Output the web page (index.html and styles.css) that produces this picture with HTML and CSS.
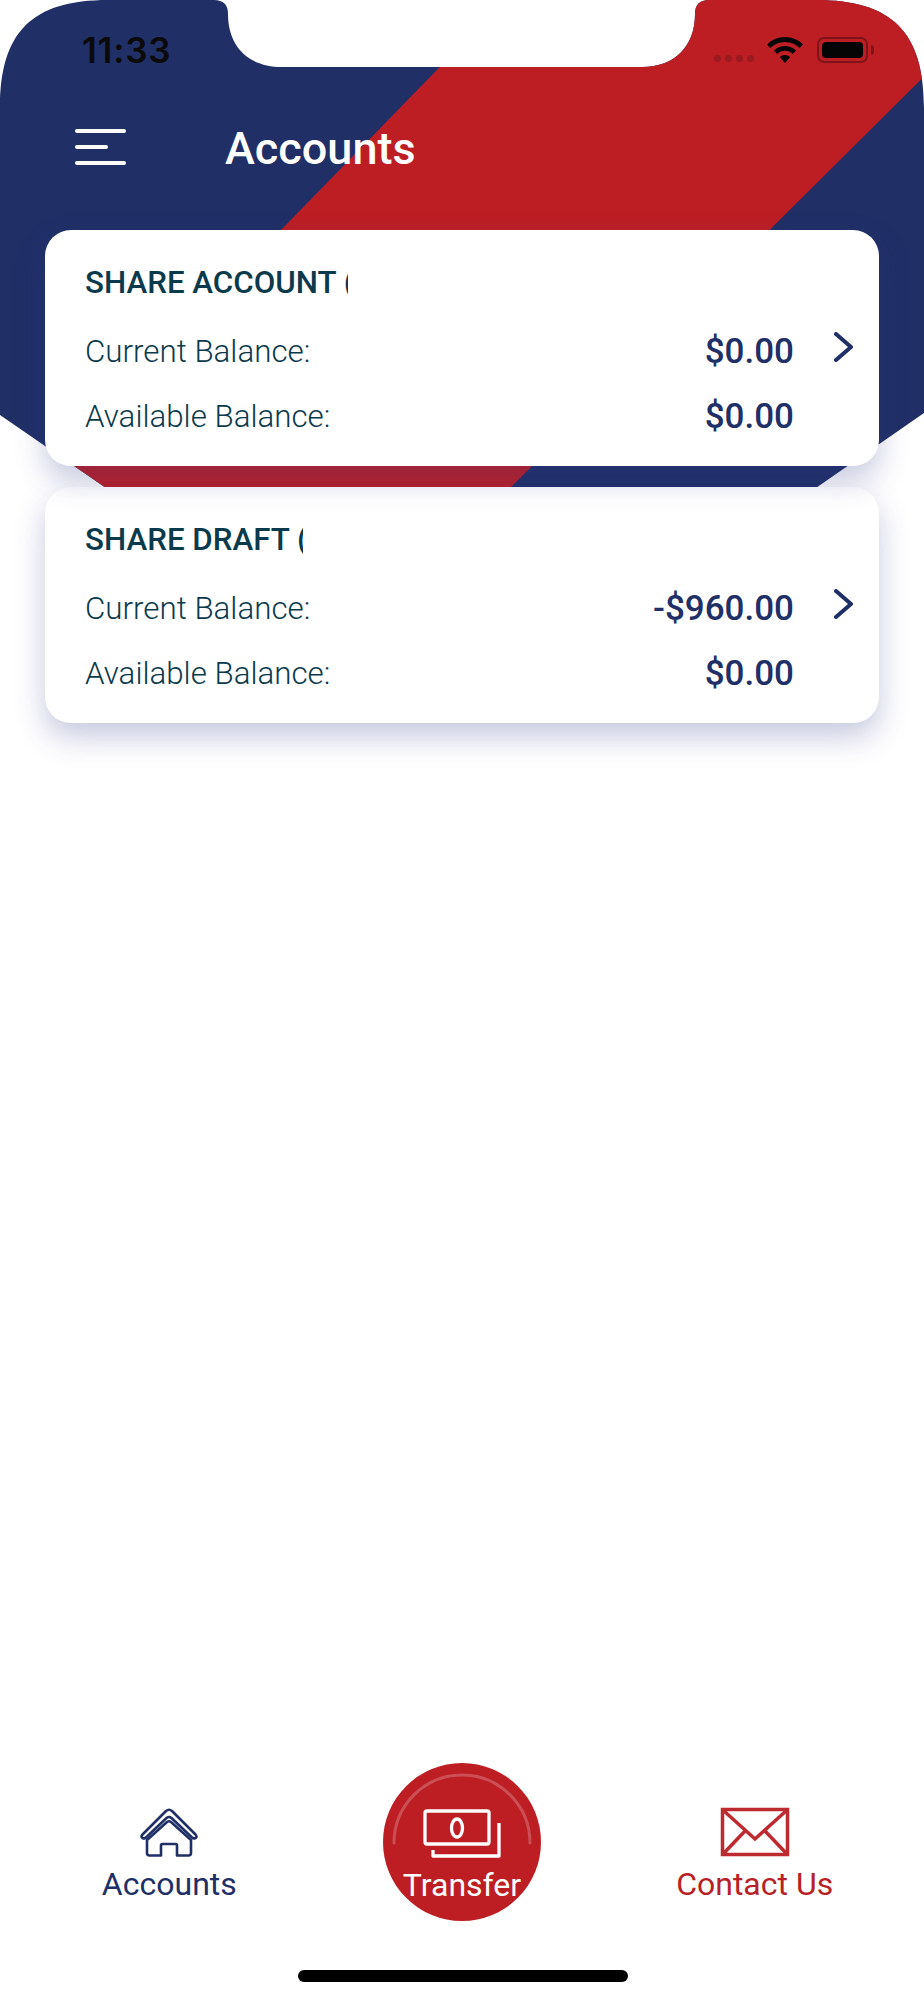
FILE: index.html
```html
<!DOCTYPE html>
<html lang="en">
<head>
<meta charset="utf-8">
<title>Accounts</title>
<link rel="stylesheet" href="styles.css">
</head>
<body>
<div class="screen">
  <svg class="backdrop" viewBox="0 0 924 500" width="924" height="500" aria-hidden="true">
    <defs>
      <clipPath id="heroShape">
        <path d="M0 108C0 32 32 0 108 0L214 0Q228 0 228 14C228 46 248 67 282 67L642 67C675 67 695 46 695 14Q695 0 709 0L816 0C892 0 924 32 924 108L924 413L800 499L122 499L0 415Z"/>
      </clipPath>
    </defs>
    <g clip-path="url(#heroShape)">
      <rect class="navy" width="924" height="500"/>
      <polygon class="red" points="505,0 1001,0 498,500 18,500"/>
    </g>
  </svg>

  <div class="status">
    <span class="time">11:33</span>
    <div class="status-icons">
      <div class="signal"><i></i><i></i><i></i><i></i></div>
      <svg class="wifi" viewBox="0 0 36 26" width="36" height="26" aria-hidden="true">
        <path d="M18 0C11 0 5 2.700 0 7.500L3.300 11C7.300 7.200 12.400 5 18 5S28.700 7.200 32.700 11L36 7.500C31 2.700 25 0 18 0Z"/>
        <path d="M18 9C13.700 9 9.900 10.700 7 13.400L10.300 16.900C12.300 15 15 13.800 18 13.800S23.700 15 25.700 16.900L29 13.400C26.100 10.700 22.300 9 18 9Z"/>
        <path d="M18 18C16 18 14.200 18.700 12.800 20L18 26L23.200 20C21.800 18.700 20 18 18 18Z"/>
      </svg>
      <div class="battery"><div class="battery-level"></div></div>
      <div class="battery-nub"></div>
    </div>
  </div>

  <header class="topbar">
    <div class="menu"><i class="menu-long"></i><i class="menu-short"></i><i class="menu-long"></i></div>
    <h1 class="page-title">Accounts</h1>
  </header>

  <main class="cards">
    <section class="card card-first">
      <div class="card-title title-share">SHARE ACCOUNT (</div>
      <div class="label">Current Balance:</div>
      <div class="value">$0.00</div>
      <svg class="chevron" viewBox="0 0 20 30" width="20" height="30" aria-hidden="true"><path d="M2 2L17 15L2 28"/></svg>
      <div class="label">Available Balance:</div>
      <div class="value">$0.00</div>
    </section>
    <section class="card">
      <div class="card-title title-draft">SHARE DRAFT (</div>
      <div class="label">Current Balance:</div>
      <div class="value">-$960.00</div>
      <svg class="chevron" viewBox="0 0 20 30" width="20" height="30" aria-hidden="true"><path d="M2 2L17 15L2 28"/></svg>
      <div class="label">Available Balance:</div>
      <div class="value">$0.00</div>
    </section>
  </main>

  <nav class="tabs">
    <div class="tab tab-accounts">
      <svg class="tab-icon" viewBox="0 0 60 50" width="60" height="50" aria-hidden="true">
        <path d="M3.500 27.500L27 4Q30 1.500 33 4L56.500 27.500Q58.500 30 56.500 31Q54.500 32 53 30.500L32.500 11Q30 9 27.500 11L7 30.500Q5.500 32 3.500 31Q1.500 29.500 3.500 27.500Z"/>
        <path d="M8 33L8 46Q8 48.500 10.500 48.500L22 48.500L22 38.500Q22 37 23.500 37L36.500 37Q38 37 38 38.500L38 48.500L49.500 48.500Q52 48.500 52 46L52 33L32 15Q30 13.500 28 15Z"/>
      </svg>
      <span>Accounts</span>
    </div>
    <div class="tab tab-transfer">
      <div class="transfer-circle">
        <svg class="transfer-art" viewBox="0 0 158 158" width="158" height="158" aria-hidden="true">
          <path class="arc" d="M11 80A68 68 0 0 1 147 80"/>
          <rect class="bill" x="42" y="48" width="64" height="33" rx="2"/>
          <ellipse class="bill" cx="74" cy="65" rx="5.500" ry="9"/>
          <path class="bill" d="M50 87L50 93L116 93L116 60"/>
        </svg>
        <span class="transfer-label">Transfer</span>
      </div>
    </div>
    <div class="tab tab-contact">
      <svg class="tab-icon" viewBox="0 0 70 50" width="70" height="50" aria-hidden="true">
        <rect x="2.500" y="2.500" width="65" height="45"/>
        <path d="M4 4L35 32L66 4M4 46L25 24M66 46L45 24"/>
      </svg>
      <span>Contact Us</span>
    </div>
  </nav>
  <div class="home-bar"></div>
</div>
</body>
</html>
```
FILE: styles.css
```css
* { box-sizing: border-box; }
html, body { margin: 0; padding: 0; background: #fff; }
body { font-family: Roboto, "Liberation Sans", sans-serif; }

.screen {
  position: relative;
  width: 924px;
  height: 2000px;
  display: flex;
  flex-direction: column;
  overflow: hidden;
  background: #fff;
}
.backdrop { position: absolute; top: 0; left: 0; }
.navy { fill: #202f66; }
.red { fill: #bd1e24; }

.status {
  position: relative;
  height: 67px;
  padding: 31px 50px 0 82px;
  display: flex;
  justify-content: space-between;
  align-items: flex-start;
}
.time {
  font-family: Inter, "Liberation Sans", sans-serif;
  font-weight: 600;
  font-size: 35px;
  line-height: 38px;
  letter-spacing: 0.8px;
  color: #0a0a0a;
}
.status-icons { display: flex; align-items: flex-start; padding-top: 6px; }
.signal { display: flex; gap: 4px; margin: 18px 13px 0 0; }
.signal i { width: 7px; height: 7px; border-radius: 50%; background: #9a1a20; }
.wifi { fill: #050505; margin-right: 14px; }
.battery {
  width: 51px;
  height: 26px;
  padding: 3px;
  border: 2px solid #7f1418;
  border-radius: 7px;
}
.battery-level { height: 100%; background: #050505; border-radius: 4px; }
.battery-nub {
  width: 3px;
  height: 10px;
  margin: 8px 0 0 3px;
  background: #7f1418;
  border-radius: 0 3px 3px 0;
}

.topbar {
  position: relative;
  height: 163px;
  padding: 0 0 0 75px;
  display: flex;
  gap: 99px;
}
.menu {
  width: 51px;
  margin-top: 62px;
  display: flex;
  flex-direction: column;
  gap: 12px;
}
.menu i { display: block; height: 4px; background: #fff; border-radius: 2px; }
.menu-long { width: 51px; }
.menu-short { width: 33px; }
.page-title {
  margin: 54px 0 0;
  font-size: 45px;
  line-height: 56px;
  font-weight: 500;
  color: #fff;
}

.cards {
  position: relative;
  padding: 0 45px;
  display: flex;
  flex-direction: column;
  gap: 21px;
}
.card {
  position: relative;
  height: 236px;
  padding: 35px 0 0 40px;
  background: #fff;
  border-radius: 26px;
  box-shadow: 0 14px 30px rgba(50, 60, 140, 0.28);
  display: grid;
  grid-template-columns: 1fr auto 85px;
  grid-template-rows: 36px 65px 65px;
}
.card-first { z-index: 1; }
.card-title {
  grid-column: 1 / -1;
  font-size: 31.300px;
  line-height: 36px;
  font-weight: 500;
  color: #0b3a4d;
  white-space: nowrap;
  overflow: hidden;
  align-self: start;
}
.title-share { width: 263px; }
.title-draft { width: 218px; }
.label {
  grid-column: 1;
  margin-top: 18px;
  font-size: 31.300px;
  line-height: 65px;
  font-weight: 300;
  color: #0b3a4d;
}
.value {
  grid-column: 2;
  margin-top: 18px;
  font-size: 35px;
  line-height: 65px;
  font-weight: 500;
  color: #202f66;
  text-align: right;
}
.chevron {
  grid-column: 3;
  margin: 31px 0 0 40px;
  fill: none;
  stroke: #202f66;
  stroke-width: 4;
  stroke-linecap: round;
  stroke-linejoin: round;
}

.tabs {
  margin-top: auto;
  height: 215px;
  padding: 22px 23px 0;
  display: grid;
  grid-template-columns: repeat(3, 1fr);
}
.tab {
  display: flex;
  flex-direction: column;
  align-items: center;
  font-size: 32px;
  line-height: 40px;
}
.tab-icon { display: block; margin-bottom: 7px; }
.tab-accounts { color: #202f66; }
.tab-accounts .tab-icon {
  fill: none;
  stroke: #202f66;
  stroke-width: 2.600;
  stroke-linejoin: round;
  stroke-linecap: round;
}
.tab-contact { color: #b81f26; }
.tab-contact .tab-icon {
  fill: none;
  stroke: #bd2a30;
  stroke-width: 3.500;
}
.transfer-circle {
  position: relative;
  width: 158px;
  height: 158px;
  margin-top: -44px;
  border-radius: 50%;
  background: #bd1e24;
  display: flex;
  justify-content: center;
  align-items: flex-end;
}
.transfer-art { position: absolute; top: 0; left: 0; fill: none; }
.arc { stroke: rgba(255, 255, 255, 0.22); stroke-width: 3; stroke-linecap: round; }
.bill { stroke: #fff; stroke-width: 3.300; stroke-linejoin: round; }
.transfer-label { position: relative; color: #fff; margin-bottom: 16px; }

.home-bar {
  position: absolute;
  left: 298px;
  top: 1970px;
  width: 330px;
  height: 12px;
  border-radius: 6px;
  background: #000;
}
```
